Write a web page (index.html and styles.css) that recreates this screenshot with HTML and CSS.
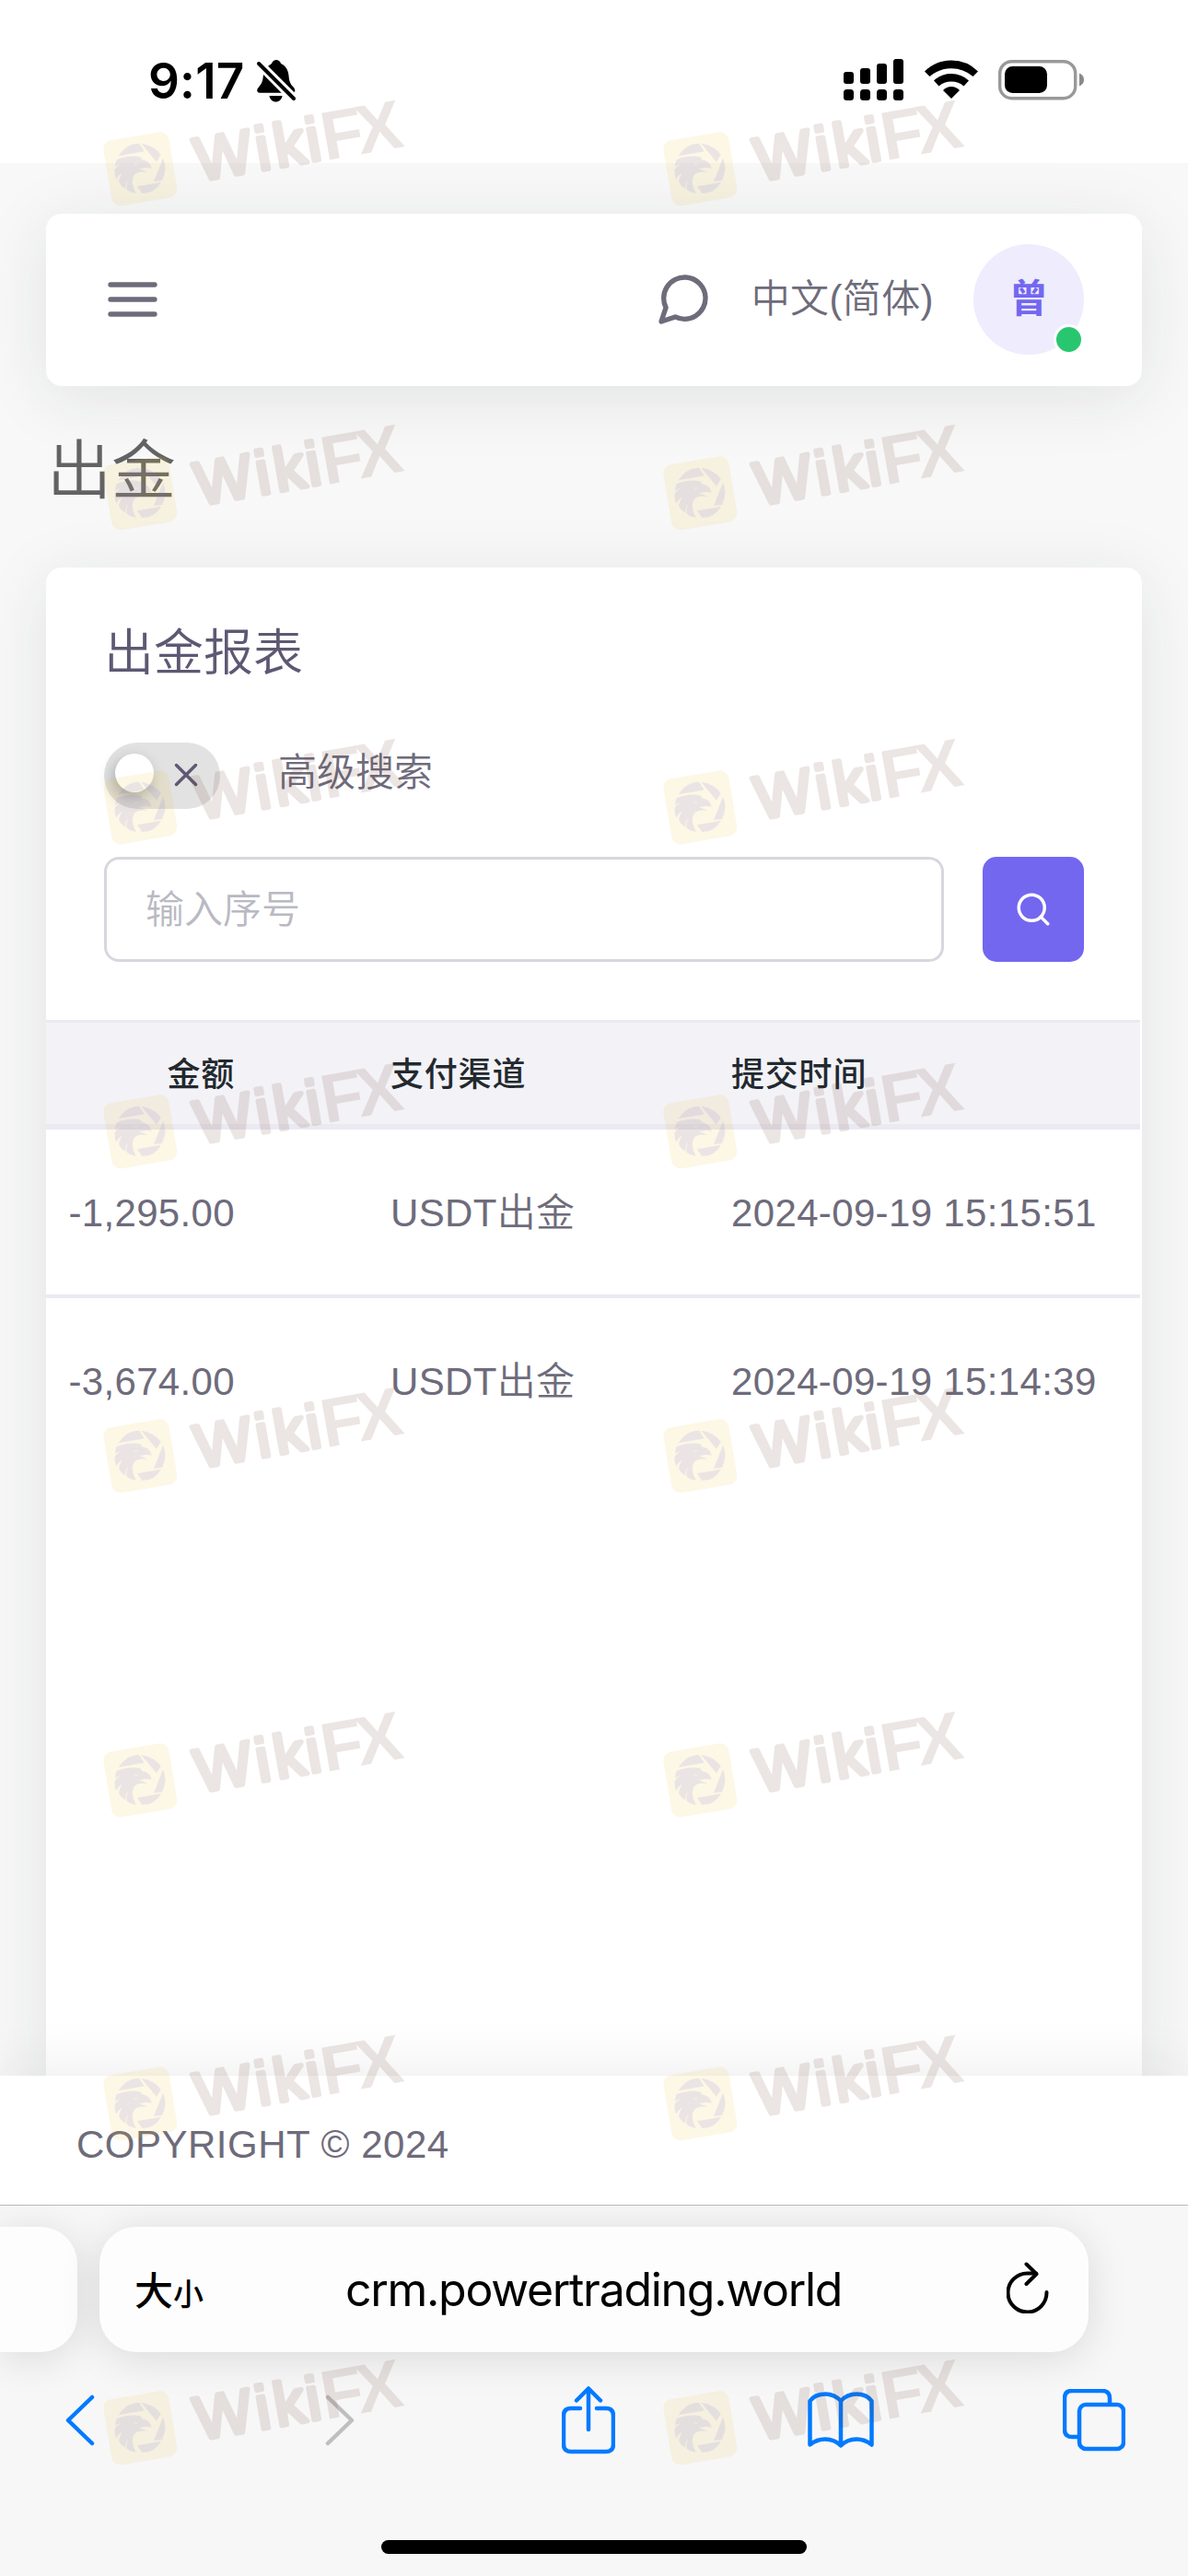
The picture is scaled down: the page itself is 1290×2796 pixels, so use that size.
FILE: index.html
```html
<!DOCTYPE html>
<html lang="zh-CN">
<head>
  <meta charset="UTF-8">
  <meta name="viewport" content="width=device-width, initial-scale=1.0">
  <title>出金报表</title>
  <link rel="stylesheet" href="styles.css">
</head>
<body>
  <header class="status-bar">
    <div class="status-left">
      <span class="status-time">9:17</span>
      <svg class="icon-bell" width="42" height="46" viewBox="0 0 42 46">
        <path d="M12 7C14 5 15 5 16 4C17 1 19 0 21 0C23 0 25 1 26 4C31 6 34 11 34.500 17C35 23 36 26 40 30C41.500 32 42 35 40 35Z"/>
        <path d="M7 15L27 35.800H3C-.5 35.800-.5 32 2 29.500C6 25 6.500 22 7 15Z"/>
        <path d="M13.500 39H27.500C27 43 24 45.500 20.500 45.500C17 45.500 14 43 13.500 39Z"/>
        <path class="bell-gap" d="M2 4L40 42"/>
        <path class="bell-slash" d="M2 4L40 42"/>
      </svg>
    </div>
    <div class="status-right">
      <svg width="66" height="46" viewBox="0 0 66 46">
        <rect x="0" y="14" width="11" height="13" rx="3"/>
        <rect x="18" y="10" width="11" height="17" rx="3"/>
        <rect x="36" y="5" width="11" height="22" rx="3"/>
        <rect x="54" y="0" width="11" height="27" rx="3"/>
        <rect x="0" y="33" width="11" height="12" rx="3.500"/>
        <rect x="18" y="33" width="11" height="12" rx="3.500"/>
        <rect x="36" y="33" width="11" height="12" rx="3.500"/>
        <rect x="54" y="33" width="11" height="12" rx="3.500"/>
      </svg>
      <svg class="icon-wifi" width="58" height="43" viewBox="0 0 58 43">
        <path d="M0 12.500Q12 .5 29 .5Q46 .5 58 12.500L52.500 18Q42 9.300 29 9.300Q16 9.300 5.500 18Z"/>
        <path d="M10 22.500Q18 15 29 15Q40 15 48 22.500L42.500 28.500Q37 23.500 29 23.500Q21 23.500 15.500 28.500Z"/>
        <path d="M20 33Q24 29 29 29Q34 29 38 33L29 42Z"/>
      </svg>
      <svg class="icon-battery" width="94" height="44" viewBox="0 0 94 44">
        <rect x="1.700" y="1.700" width="82" height="40" rx="13" fill="none" stroke="#999" stroke-width="3.400"/>
        <rect x="7" y="7" width="46" height="29" rx="8.500"/>
        <path d="M88 14.500Q93 16.500 93 21.500Q93 26.500 88 28.500Z" fill="#8a8a8a"/>
      </svg>
    </div>
  </header>

  <main class="app-content">
    <nav class="navbar">
      <svg class="icon" width="64" height="64" viewBox="0 0 24 24">
        <path d="M3 12H21M3 6H21M3 18H21"/>
      </svg>
      <div class="navbar-right">
        <svg class="icon" width="64" height="64" viewBox="0 0 24 24">
          <path d="M21 11.500a8.380 8.380 0 0 1-.9 3.800 8.500 8.500 0 0 1-7.600 4.700 8.380 8.380 0 0 1-3.800-.9L3 21l1.900-5.700a8.380 8.380 0 0 1-.9-3.800 8.500 8.500 0 0 1 4.700-7.600 8.380 8.380 0 0 1 3.800-.9h.5a8.480 8.480 0 0 1 8 8v.5z"/>
        </svg>
        <span class="language">中文(简体)</span>
        <div class="avatar">曾<span class="avatar-status"></span></div>
      </div>
    </nav>

    <h1 class="page-title">出金</h1>

    <section class="card">
      <div class="card-body">
        <h2 class="card-title">出金报表</h2>
        <div class="switch-row">
          <div class="switch">
            <span class="switch-thumb"></span>
            <svg class="switch-icon" width="42" height="42" viewBox="0 0 24 24">
              <path d="M18 6L6 18M6 6L18 18"/>
            </svg>
          </div>
          <label class="switch-label">高级搜索</label>
        </div>
        <form class="search-row">
          <input class="search-input" type="text" placeholder="输入序号">
          <button class="search-button" type="button">
            <svg width="42" height="42" viewBox="0 0 24 24">
              <circle cx="11" cy="11" r="8"/>
              <path d="M21 21L16.650 16.650"/>
            </svg>
          </button>
        </form>
      </div>
      <table class="report-table">
        <colgroup>
          <col class="col-amount">
          <col class="col-channel">
          <col>
        </colgroup>
        <thead>
          <tr><th>金额</th><th>支付渠道</th><th>提交时间</th></tr>
        </thead>
        <tbody>
          <tr><td>-1,295.00</td><td>USDT出金</td><td>2024-09-19 15:15:51</td></tr>
          <tr><td>-3,674.00</td><td>USDT出金</td><td>2024-09-19 15:14:39</td></tr>
        </tbody>
      </table>
    </section>
  </main>

  <footer class="footer">COPYRIGHT © 2024</footer>

  <div class="browser-bar">
    <div class="tab-strip">
      <div class="tab-prev"></div>
      <div class="address">
        <span class="text-size">大<small>小</small></span>
        <span class="url">crm.powertrading.world</span>
        <svg class="icon-reload" width="46" height="56" viewBox="0 0 46 56">
          <path d="M43.500 33A21 21 0 1 1 22.500 12.500H32"/>
          <path d="M21.500 2.500L32.500 13.300L21.500 24"/>
        </svg>
      </div>
    </div>
    <div class="toolbar">
      <svg width="32" height="56" viewBox="0 0 32 56"><path d="M29 3L3 28L29 53"/></svg>
      <svg class="disabled" width="32" height="56" viewBox="0 0 32 56"><path d="M3 3L29 28L3 53"/></svg>
      <svg width="58" height="74" viewBox="0 0 58 74">
        <path d="M20 24H10Q2 24 2 32V63Q2 71 10 71H48Q56 71 56 63V32Q56 24 48 24H38"/>
        <path d="M29 47V3M16 15.500L29 2.500L42 15.500"/>
      </svg>
      <svg width="72" height="62" viewBox="0 0 72 62">
        <path d="M36 10Q29 2.500 19 2.500Q8 2.500 2.500 10V57.500Q10 51.500 19 51.500Q29 51.500 36 58.500Q43 51.500 53 51.500Q62 51.500 69.500 57.500V10Q64 2.500 53 2.500Q43 2.500 36 10V58"/>
      </svg>
      <svg width="68" height="68" viewBox="0 0 68 68">
        <rect x="18" y="17" width="48" height="48" rx="7"/>
        <path d="M16 52H10Q2 52 2 44V10Q2 2 10 2H43Q51 2 51 10V15"/>
      </svg>
    </div>
    <div class="home-indicator"></div>
  </div>

  <svg class="watermarks" width="1290" height="2796" viewBox="0 0 1290 2796">
    <defs>
      <g id="mark">
        <rect class="mark-tile" x="-108" y="-108" width="216" height="216" rx="29" transform="translate(157 280) rotate(-9.500)"/>
        <g class="mark-bird">
          <path d="M86 238Q111 198 153 197L170 223Z"/>
          <path d="M160 197Q204 204 224 234L210 257Z"/>
          <path d="M231 245Q247 280 228 318L201 321Z"/>
          <path d="M225 323Q203 361 163 360L147 337Z"/>
          <path fill-rule="evenodd" d="M80 250Q120 234 155 241Q165 246 161 250Q188 252 194 278Q182 275 172 276Q162 279 152 279Q168 284 181 291Q138 285 133 310Q128 335 144 359Q125 357 113 347Q110 333 117 314Q107 328 109 344Q92 334 87 320Q89 306 98 293Q84 301 79 314Q71 297 75 280Q82 271 92 265Q82 267 75 273Q76 260 80 250ZM132 260Q140 266 150 262Q144 271 132 260Z"/>
        </g>
        <g class="mark-text" transform="translate(346 330) rotate(-10)">
          <text class="mark-round" x="3 204 264 371" y="-10">Wiki</text>
          <text class="mark-sharp" x="421 537" y="-4">FX</text>
        </g>
      </g>
      <g id="mark-row">
        <use href="#mark" transform="translate(100 0) scale(.3333)"/>
        <use href="#mark" transform="translate(708 0) scale(.3333)"/>
      </g>
    </defs>
    <use href="#mark-row" y="90"/>
    <use href="#mark-row" y="442"/>
    <use href="#mark-row" y="783"/>
    <use href="#mark-row" y="1135"/>
    <use href="#mark-row" y="1487"/>
    <use href="#mark-row" y="1839"/>
    <use href="#mark-row" y="2190"/>
    <use href="#mark-row" y="2542"/>
  </svg>
</body>
</html>
```
FILE: styles.css
```css
* {
  box-sizing: border-box;
}

body {
  position: relative;
  display: flex;
  flex-direction: column;
  width: 1290px;
  height: 2796px;
  margin: 0;
  overflow: hidden;
  background-color: #f8f8f8;
  color: #6e6b7b;
  font-family: "Liberation Sans", "Noto Sans CJK SC", sans-serif;
  font-size: 42px;
  font-weight: 350;
}

svg {
  display: block;
  flex: none;
}

/* phone status bar */
.status-bar {
  position: relative;
  z-index: 1;
  display: flex;
  justify-content: space-between;
  flex: none;
  height: 177px;
  padding: 64px 112px 0 161px;
  background-color: #fff;
}

.status-left,
.status-right {
  display: flex;
  align-items: flex-start;
}

.status-time {
  width: 118px;
  color: #000;
  font-family: Inter, sans-serif;
  font-size: 53px;
  font-weight: 600;
  line-height: 48px;
  letter-spacing: 0.2px;
  white-space: nowrap;
}

.icon-bell {
  margin-top: 1px;
}

.bell-gap,
.bell-slash {
  stroke: #fff;
  stroke-width: 10;
}

.bell-slash {
  stroke: #000;
  stroke-width: 4;
  stroke-linecap: round;
}

.icon-wifi {
  margin: 1px 0 0 22px;
}

.icon-battery {
  margin: 1px 0 0 22px;
}

/* page */
.app-content {
  display: flex;
  flex: none;
  flex-direction: column;
  height: 2076px;
  padding: 55px 50px 0;
}

.icon {
  fill: none;
  stroke: #6e6b7b;
  stroke-width: 2;
  stroke-linecap: round;
  stroke-linejoin: round;
}

.navbar {
  display: flex;
  align-items: center;
  justify-content: space-between;
  flex: none;
  height: 187px;
  padding: 0 63px 1px 62px;
  border-radius: 17px;
  background-color: #fff;
  box-shadow: 0 12px 72px rgba(34, 41, 47, 0.1);
}

.navbar-right {
  display: flex;
  align-items: center;
}

.language {
  margin: 0 43px 0 42px;
  line-height: 60px;
  letter-spacing: 0.4px;
}

.avatar {
  position: relative;
  width: 120px;
  height: 120px;
  border-radius: 50%;
  background-color: #eeecfd;
  color: #7367f0;
  font-weight: bold;
  line-height: 120px;
  text-align: center;
}

.avatar-status {
  position: absolute;
  right: 0;
  bottom: 0;
  width: 33px;
  height: 33px;
  border: 3px solid #fff;
  border-radius: 50%;
  background-color: #28c76f;
}

.page-title {
  margin: 43px 0 54px 1px;
  color: #636363;
  font-size: 70px;
  font-weight: 350;
  line-height: 100px;
}

.card {
  flex: 1;
  border-radius: 17px 17px 0 0;
  background-color: #fff;
  box-shadow: 0 12px 72px rgba(34, 41, 47, 0.1);
}

.card-body {
  padding: 53px 63px 63px;
}

.card-title {
  margin: 0 0 57px;
  color: #5e5873;
  font-size: 54px;
  font-weight: 350;
  line-height: 80px;
}

.switch-row {
  display: flex;
  align-items: center;
  margin-bottom: 52px;
}

.switch {
  display: flex;
  align-items: center;
  justify-content: space-between;
  width: 126px;
  height: 72px;
  padding: 0 16px 0 12px;
  border-radius: 36px;
  background-color: #e2e2e2;
}

.switch-thumb {
  width: 42px;
  height: 42px;
  margin-bottom: 6px;
  border-radius: 50%;
  background-color: #fff;
  box-shadow: -3px 6px 15px rgba(34, 41, 47, 0.3);
}

.switch-icon {
  margin-bottom: 2px;
  fill: none;
  stroke: #5e5873;
  stroke-width: 2;
  stroke-linecap: round;
}

.switch-label {
  margin: 0 0 6px 63px;
  line-height: 62px;
}

.search-row {
  display: flex;
  gap: 42px;
}

.search-input {
  flex: 1;
  height: 114px;
  padding: 2px 42px 0;
  border: 3px solid #d8d6de;
  border-radius: 16px;
  background-color: #fff;
  font-family: inherit;
  font-size: 42px;
  font-weight: 350;
}

.search-input::placeholder {
  color: #b9b9c3;
}

.search-button {
  display: flex;
  align-items: center;
  justify-content: center;
  width: 110px;
  height: 114px;
  padding: 0;
  border: none;
  border-radius: 15px;
  background-color: #7367f0;
}

.search-button svg {
  fill: none;
  stroke: #fff;
  stroke-width: 2;
  stroke-linecap: round;
}

.report-table {
  width: 1188px;
  border-collapse: separate;
  border-spacing: 0;
  table-layout: fixed;
}

.col-amount {
  width: 289px;
}

.col-channel {
  width: 370px;
}

.report-table th,
.report-table td {
  padding: 0 0 0 85px;
  line-height: 60px;
  text-align: left;
  white-space: nowrap;
}

.report-table th:first-child,
.report-table td:first-child {
  padding-right: 84px;
  padding-left: 0;
  text-align: right;
}

.report-table th {
  height: 119px;
  padding-top: 3px;
  border-top: 3px solid #ebe9f1;
  border-bottom: 6px solid #ebe9f1;
  background-color: #f3f2f7;
  color: #22292f;
  font-size: 36px;
  font-weight: 500;
  letter-spacing: 0.8px;
}

.report-table td {
  height: 183px;
  padding-top: 3px;
  border-bottom: 4px solid #ebe9f1;
  letter-spacing: 0.35px;
}

.report-table tbody tr:last-child td {
  border-bottom-color: transparent;
}

.footer {
  position: relative;
  flex: none;
  height: 140px;
  padding-left: 83px;
  background-color: #fff;
  box-shadow: 0 -8px 60px rgba(34, 41, 47, 0.08);
  line-height: 149px;
  letter-spacing: 0.5px;
}

/* browser chrome */
.browser-bar {
  position: relative;
  display: flex;
  flex: none;
  flex-direction: column;
  height: 403px;
  border-top: 1px solid #b8b8b9;
  background-color: #f7f7f8;
  overflow: hidden;
}

.tab-strip {
  display: flex;
  gap: 24px;
  margin-top: 23px;
}

.tab-prev,
.address {
  height: 136px;
  background-color: #fdfdfd;
  box-shadow: 0 6px 45px rgba(0, 0, 0, 0.12);
}

.tab-prev {
  width: 84px;
  border-radius: 0 40px 40px 0;
}

.address {
  display: flex;
  align-items: center;
  justify-content: space-between;
  width: 1074px;
  padding: 0 43px 0 38px;
  border-radius: 40px;
  color: #000;
}

.text-size {
  width: 83px;
  margin-bottom: 4px;
  font-size: 42px;
  font-weight: 500;
  white-space: nowrap;
}

.text-size small {
  font-size: 33px;
}

.url {
  margin-left: -33px;
  font-family: Inter, sans-serif;
  font-size: 50px;
  font-weight: 400;
  letter-spacing: -1.3px;
}

.icon-reload {
  margin-bottom: 5px;
  fill: none;
  stroke: #000;
  stroke-width: 4;
  stroke-linecap: round;
  stroke-linejoin: round;
}

.toolbar {
  display: grid;
  grid-template-columns: 282px 257px 267px 277px auto;
  align-items: center;
  height: 80px;
  margin: 34px 68px 0 71px;
}

.toolbar svg {
  fill: none;
  stroke: #007aff;
  stroke-width: 4.500;
  stroke-linecap: round;
  stroke-linejoin: round;
}

.toolbar .disabled {
  stroke: #bfbfbf;
}

.home-indicator {
  width: 462px;
  height: 15px;
  margin: 90px auto 0;
  border-radius: 8px;
  background-color: #000;
}

/* tiled mark over the whole screen */
.watermarks {
  position: absolute;
  top: 0;
  left: 0;
  z-index: 2;
  pointer-events: none;
}

.mark-tile {
  fill: rgb(240, 193, 63);
  opacity: 0.13;
}

.mark-bird {
  fill: rgb(115, 116, 222);
  opacity: 0.13;
}

.mark-text {
  fill: rgb(109, 63, 48);
  stroke: rgb(109, 63, 48);
  stroke-width: 0;
  opacity: 0.13;
  font-family: "Liberation Sans", sans-serif;
}

.mark-round {
  font-size: 198px;
  font-weight: 400;
  stroke-width: 15;
  stroke-linecap: round;
  stroke-linejoin: round;
}

.mark-sharp {
  font-size: 224px;
  font-weight: bold;
}
```
